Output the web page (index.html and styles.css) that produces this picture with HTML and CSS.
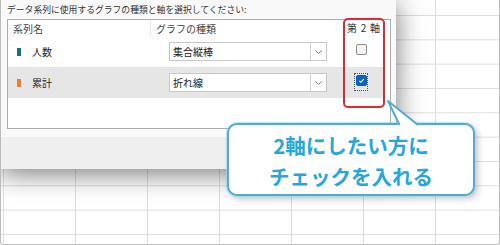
FILE: index.html
```html
<!DOCTYPE html>
<html lang="ja">
<head>
    <meta charset="UTF-8">
    <title>グラフの種類の変更</title>
    <link rel="stylesheet" href="styles.css">
</head>
<body>
    <div class="frame">
        <div class="dialog">
            <div class="dialog-body">
                <p class="prompt">データ系列に使用するグラフの種類と軸を選択してください:</p>
                <div class="series-list">
                    <div class="row head">
                        <span class="c-name">系列名</span>
                        <span class="c-type">グラフの種類</span>
                        <span class="c-axis">第 2 軸</span>
                    </div>
                    <div class="row">
                        <span class="c-name"><i class="swatch teal"></i>人数</span>
                        <span class="c-type">
                            <span class="select">集合縦棒
                                <span class="chev"><svg width="7" height="4" viewBox="0 0 7 4"><polyline points="0.5,0.5 3.5,3.5 6.5,0.5" fill="none" stroke="#808080" stroke-width="1"/></svg></span>
                            </span>
                        </span>
                        <span class="c-axis"><span class="check-wrap"><span class="check"></span></span></span>
                    </div>
                    <div class="row selected">
                        <span class="c-name"><i class="swatch orange"></i>累計</span>
                        <span class="c-type">
                            <span class="select">折れ線
                                <span class="chev"><svg width="7" height="4" viewBox="0 0 7 4"><polyline points="0.5,0.5 3.5,3.5 6.5,0.5" fill="none" stroke="#808080" stroke-width="1"/></svg></span>
                            </span>
                        </span>
                        <span class="c-axis"><span class="check-wrap focus"><span class="check on"><svg width="9" height="9" viewBox="0 0 9 9"><polyline points="2.3,4.8 3.9,6.3 6.8,3" fill="none" stroke="#fff" stroke-width="1.1"/></svg></span></span></span>
                    </div>
                </div>
            </div>
            <div class="dialog-foot"></div>
        </div>

        <!-- overlays: highlight + callout -->
        <div class="highlight"></div>
        <div class="callout">
            <p>2軸にしたい方に</p>
            <p>チェックを入れる</p>
        </div>
        <svg class="callout-tail" width="45" height="32" viewBox="0 0 45 32">
            <polygon points="8,6 19,31.5 39,31.5" fill="#fff"/>
            <path d="M19.5 30 L8 6 L38 30" fill="none" stroke="#52acd2" stroke-width="2" stroke-linejoin="round"/>
        </svg>
    </div>
</body>
</html>
```

FILE: styles.css
```css
body {
    margin: 0;
    background: #fff;
}

.frame {
    position: relative;
    width: 500px;
    height: 245px;
    overflow: hidden;
    background-color: #fff;
    background-image:
        linear-gradient(to right, #dedede 1px, transparent 1px),
        linear-gradient(to bottom, #dedede 1px, transparent 1px);
    background-size: 72px 24.33px;
    background-position: 3px 15px;
    font-family: "Noto Sans CJK JP", "Noto Sans", sans-serif;
}

.frame::after {
    content: "";
    position: absolute;
    inset: 0;
    border: 1px solid #bcbcbc;
    border-top: none;
    border-radius: 0 0 3px 3px;
    pointer-events: none;
}

.dialog {
    width: 396px;
    height: 169px;
    background: #f9f9f9;
    box-shadow: 0 4px 26px rgba(0, 0, 0, 0.55);
    display: flex;
    flex-direction: column;
}

.dialog-body {
    padding: 2px 0 0 7px;
}

.prompt {
    margin: 0;
    font-size: 8.8px;
    line-height: 15px;
    color: #333;
}

.series-list {
    margin-top: 2px;
    width: 384px;
    height: 110px;
    box-sizing: border-box;
    border: 1px solid #acacac;
    background: #fff;
}

.row {
    display: grid;
    grid-template-columns: 142px 193px 1fr;
    height: 31px;
    font-size: 10px;
    color: #222;
}

.row > span {
    display: flex;
    align-items: center;
}

.row.head {
    height: 16px;
    color: #444;
}

.row.head .c-name {
    padding-left: 5px;
}

.row.head .c-type {
    padding-left: 5px;
    border-left: 1px solid #e8e8e8;
}

.row.head .c-axis {
    padding-left: 4px;
    color: #333;
    white-space: pre;
    word-spacing: 1.5px;
}

.row.selected {
    background: #e6e6e6;
    margin-right: 5px;
}

.swatch {
    display: inline-block;
    width: 4px;
    height: 8px;
    margin: 0 11px 0 9px;
}

.swatch.teal {
    background: #1e6b7b;
}

.swatch.orange {
    background: #ed7d31;
}

.select {
    position: relative;
    margin-left: 19px;
    width: 158px;
    height: 19px;
    box-sizing: border-box;
    border: 1px solid #c8c8c8;
    background: #fff;
    padding-left: 3px;
    display: flex;
    align-items: center;
    color: #1a1a1a;
}

.chev {
    position: absolute;
    right: 0;
    top: 0;
    bottom: 0;
    width: 16px;
    box-sizing: border-box;
    border-left: 1px solid #d4d4d4;
    display: flex;
    align-items: center;
    justify-content: center;
}

.row > span.c-axis {
    align-items: flex-start;
}

.check-wrap {
    margin: 6px 0 0 11px;
    width: 14px;
    height: 18px;
    box-sizing: border-box;
    padding: 2px 1px 0 2px;
}

.check-wrap.focus {
    outline: 1px dotted #555;
    outline-offset: -1px;
}

.check {
    display: block;
    width: 11px;
    height: 11px;
    box-sizing: border-box;
    border: 1px solid #8e8e8e;
    border-radius: 2px;
    background: #f3f3f3;
}

.check.on {
    border-color: #0a5cc0;
    background: #0a62c8;
    display: flex;
    align-items: center;
    justify-content: center;
}

.dialog-foot {
    margin-top: 8px;
    flex: 1;
    background: #efefef;
}

.highlight {
    position: absolute;
    left: 343px;
    top: 18px;
    width: 42px;
    height: 90px;
    box-sizing: border-box;
    border: 2px solid #dc2a32;
    border-radius: 5px;
}

.callout {
    position: absolute;
    left: 227px;
    top: 123px;
    width: 248px;
    height: 73px;
    box-sizing: border-box;
    border: 2px solid #52acd2;
    border-radius: 10px;
    background: #fff;
    box-shadow: 0 0 0 1px rgba(160, 215, 238, 0.6), 3px 3px 6px rgba(0, 0, 0, 0.22);
    display: flex;
    flex-direction: column;
    justify-content: center;
    align-items: center;
    padding-top: 2px;
}

.callout p {
    margin: 0;
    font-size: 20.5px;
    line-height: 31px;
    font-weight: 700;
    color: #26a6da;
    white-space: nowrap;
}

.callout-tail {
    position: absolute;
    left: 380px;
    top: 95px;
}
```
